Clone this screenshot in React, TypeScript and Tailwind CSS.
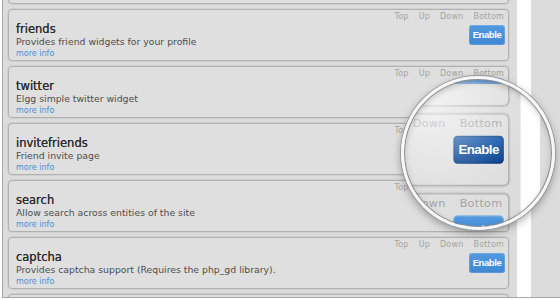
import React from "react";

type Plugin = { name: string; desc: string; dark?: boolean };

const plugins: Plugin[] = [
  { name: "profile", desc: "Elgg profile plugin" },
  { name: "friends", desc: "Provides friend widgets for your profile" },
  { name: "twitter", desc: "Elgg simple twitter widget" },
  { name: "invitefriends", desc: "Friend invite page", dark: true },
  { name: "search", desc: "Allow search across entities of the site" },
  { name: "captcha", desc: "Provides captcha support (Requires the php_gd library)." },
  { name: "crontrigger", desc: "Provides a poor man's cron" },
];

function Card({ p }: { p: Plugin }) {
  return (
    <div className="flex h-[52px] shrink-0 rounded-[4px] border border-[#b1b1b1] bg-[#dfdfdf] shadow-[0_0_0_1px_rgba(0,0,0,0.05)]">
      <div className="flex flex-1 flex-col pl-[7px] pt-[13px]">
        <div className="h-[13px] text-[11.5px] leading-[13px] text-[#2e2e2e] [text-shadow:0_0_0.4px_#2e2e2e]">{p.name}</div>
        <div className="h-[12px] text-[9.3px] leading-[12px] text-[#4e4e4e]">{p.desc}</div>
        <div className="h-[11px] text-[8px] leading-[11px] text-[#4690d6]">more info</div>
      </div>
      <div className="flex flex-col items-end pr-[3px] pt-[2px]">
        <div className="flex h-[10px] gap-[10px] pr-[1px] text-[8px] leading-[10px] tracking-[0.2px] text-[#a3a3a3]">
          <span>Top</span>
          <span>Up</span>
          <span>Down</span>
          <span>Bottom</span>
        </div>
        <div
          className={
            "mt-[3px] flex h-[20px] w-[36px] items-center justify-center rounded-[3px] font-['Liberation_Sans',Arial,sans-serif] text-[9.5px] font-bold tracking-[-0.4px] text-white " +
            (p.dark
              ? "bg-gradient-to-b from-[#1559ad] to-[#023c8c] shadow-[inset_0_0_0_1px_rgba(0,0,0,0.2)]"
              : "bg-gradient-to-b from-[#519ae0] to-[#3f87d3] shadow-[inset_0_0_0_1px_rgba(255,255,255,0.15)]")
          }
        >
          Enable
        </div>
      </div>
    </div>
  );
}

function Page() {
  return (
    <div className="h-[300px] w-[560px] bg-white">
      <div className="ml-[2px] flex h-[298px] overflow-hidden border-b border-l border-[#a6a6a6] bg-[#dcdcdc]">
        <div className="w-[514px] shrink-0 pl-[5px] pr-[8px]">
          <div className="-mt-[48px] flex flex-col gap-[5px]">
            {plugins.map((p) => (
              <Card key={p.name} p={p} />
            ))}
          </div>
        </div>
        <div className="w-[14px] shrink-0 bg-white" />
        <div className="flex-1 bg-[#dcdcdc]" />
      </div>
    </div>
  );
}

export default function App() {
  return (
    <div className="relative h-[300px] w-[560px] overflow-hidden font-['DejaVu_Sans',Verdana,sans-serif]">
      <Page />
      <div className="absolute left-[401px] top-[76px] h-[154px] w-[154px] rounded-full shadow-[0_3px_8px_rgba(0,0,0,0.35)]">
        <div className="absolute inset-0 overflow-hidden rounded-full">
          <div className="absolute left-[-401px] top-[-76px] h-[300px] w-[560px] origin-[508px_147px] scale-[1.4]">
            <Page />
          </div>
          <div className="absolute inset-0 rounded-full bg-[radial-gradient(circle_at_22%_18%,rgba(255,255,255,0.6),rgba(255,255,255,0.2)_35%,rgba(255,255,255,0)_55%)]" />
        </div>
        <div className="absolute inset-0 rounded-full border-[3px] border-[#f7f7f7] shadow-[0_0_0_1px_#9a9a9a,inset_0_0_0_1px_#8c8c8c,inset_0_2px_6px_rgba(0,0,0,0.25)]" />
      </div>
    </div>
  );
}
